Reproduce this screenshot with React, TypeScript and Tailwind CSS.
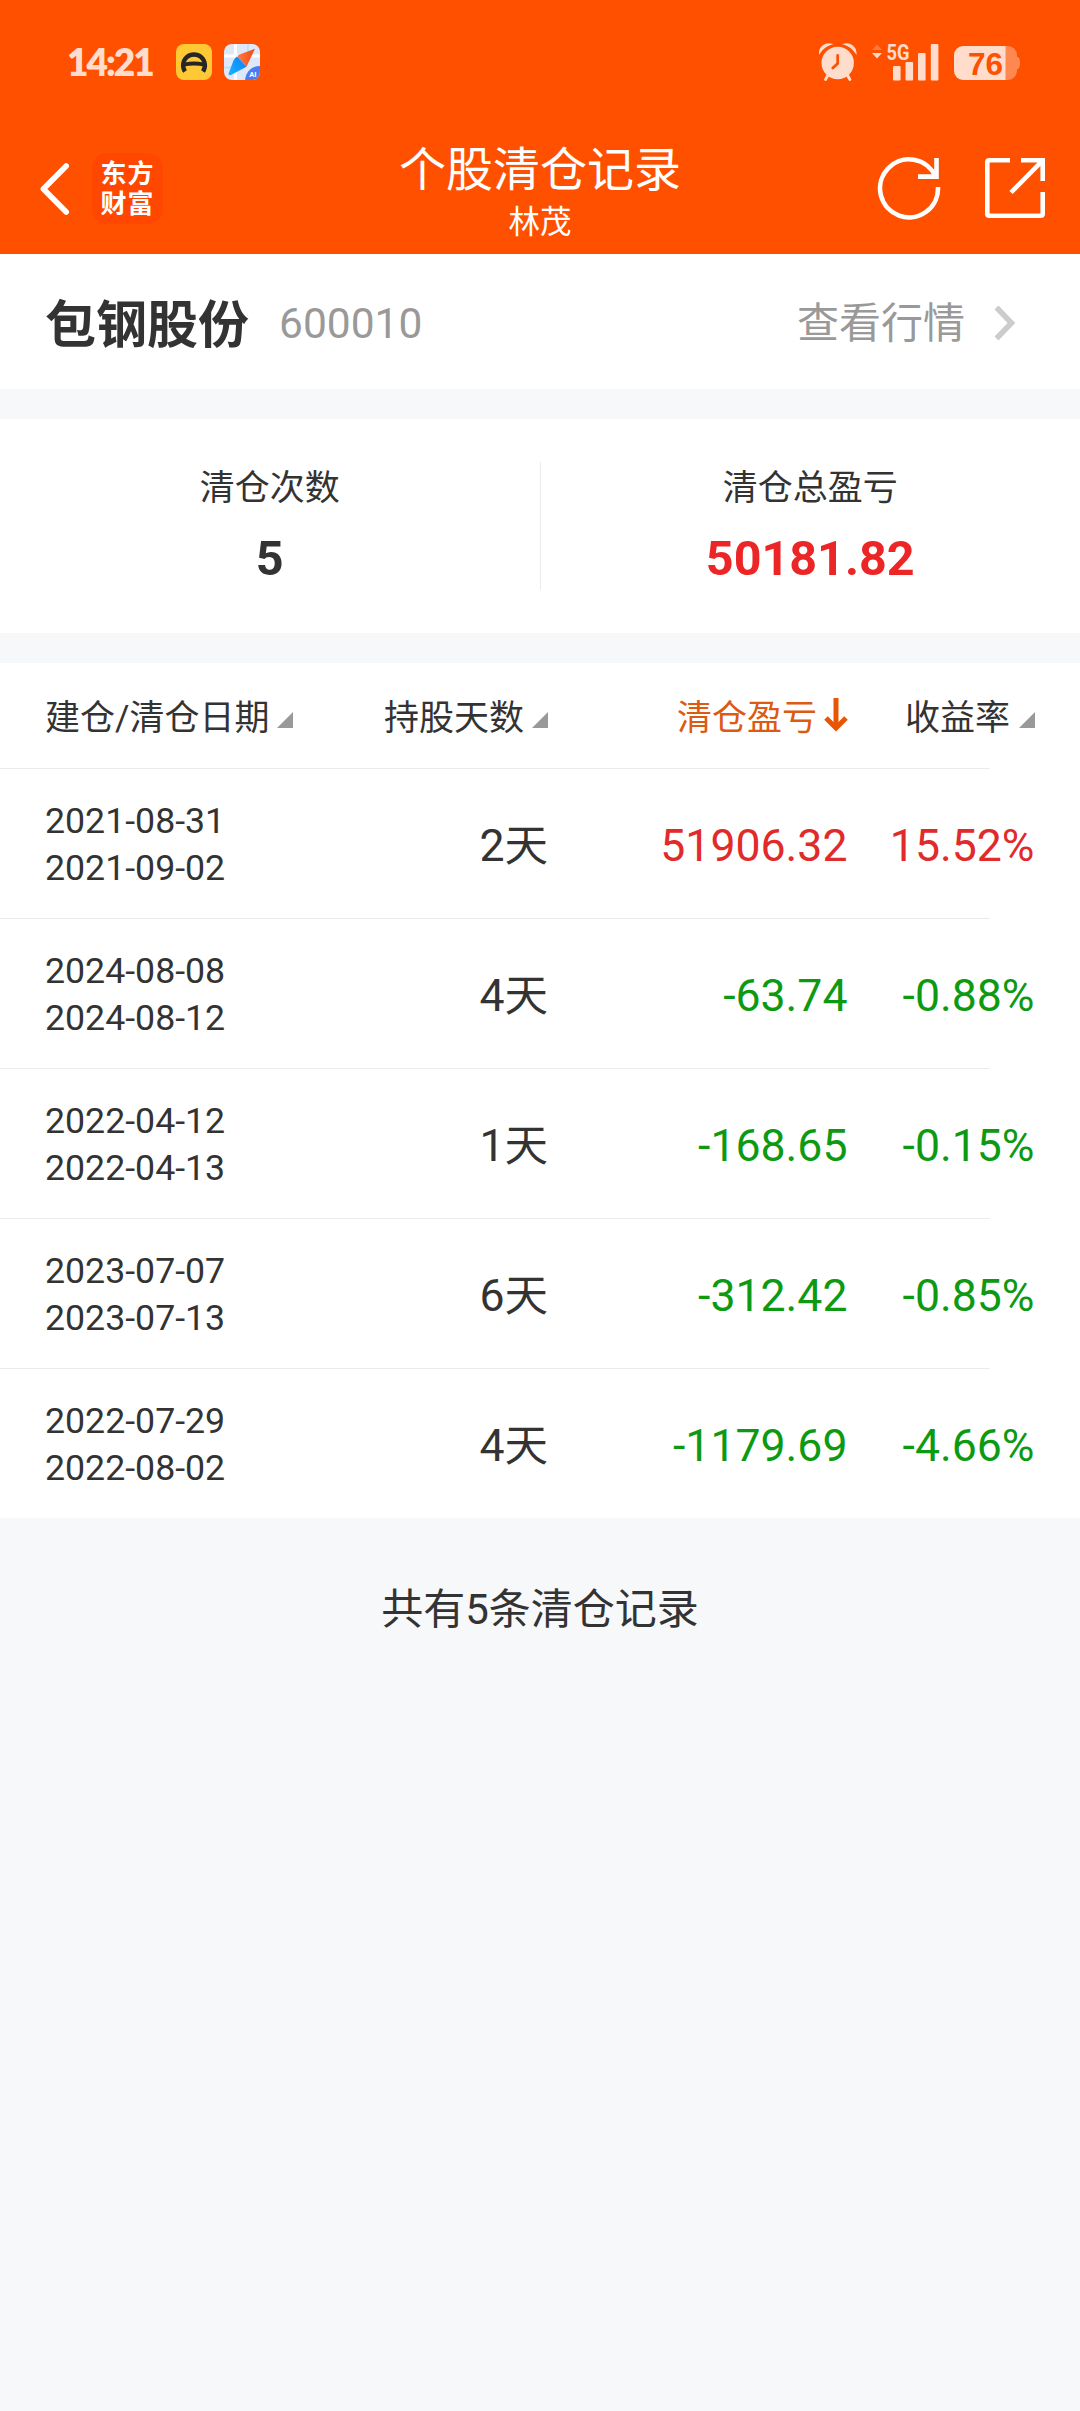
type ClearRecord = {
  open: string;
  close: string;
  days: number;
  profit: string;
  rate: string;
};

const RECORDS: ClearRecord[] = [
  { open: "2021-08-31", close: "2021-09-02", days: 2, profit: "51906.32", rate: "15.52%" },
  { open: "2024-08-08", close: "2024-08-12", days: 4, profit: "-63.74", rate: "-0.88%" },
  { open: "2022-04-12", close: "2022-04-13", days: 1, profit: "-168.65", rate: "-0.15%" },
  { open: "2023-07-07", close: "2023-07-13", days: 6, profit: "-312.42", rate: "-0.85%" },
  { open: "2022-07-29", close: "2022-08-02", days: 4, profit: "-1179.69", rate: "-4.66%" },
];

function CarAppIcon() {
  return (
    <svg width="36" height="36" viewBox="0 0 36 36">
      <rect width="36" height="36" rx="8" fill="#ffc935" />
      <path d="M9 27.5 A10.9 10.9 0 1 1 27 27.5" fill="none" stroke="#262626" strokeWidth="4.4" />
      <path d="M8 18.8 Q18 16.4 28 18.8 V22.4 Q18 20.6 8 22.4 Z" fill="#262626" />
    </svg>
  );
}

function MapAppIcon() {
  return (
    <svg width="36" height="36" viewBox="0 0 36 36">
      <defs>
        <clipPath id="map-tile">
          <rect width="36" height="36" rx="8" />
        </clipPath>
        <linearGradient id="needle-blue" x1="0" y1="1" x2="1" y2="0">
          <stop offset="0" stopColor="#19b5ff" />
          <stop offset="1" stopColor="#0a7cff" />
        </linearGradient>
        <linearGradient id="needle-red" x1="0" y1="0" x2="1" y2="0">
          <stop offset="0" stopColor="#ff7a45" />
          <stop offset="1" stopColor="#f04a12" />
        </linearGradient>
      </defs>
      <g clipPath="url(#map-tile)">
        <rect width="36" height="36" fill="#dde8fa" />
        <path d="M0 12 H36 M11.5 0 V36" stroke="#fff" strokeWidth="3" />
        <path d="M0 23.5 H10 M24 0 V9" stroke="#b9dcf2" strokeWidth="1.5" />
        <path d="M36 22 C27 22 22 28 21 36 H36 Z" fill="#4a7df5" />
        <path d="M31 4.8 L15.5 10.5 Q13 11.5 14 13.5 L22.5 22.8 Z" fill="url(#needle-red)" />
        <path d="M13 12.5 Q10.5 14 9.5 16.5 L4.6 29.5 Q4.5 31.8 7 31 L22.5 22.8 Z" fill="url(#needle-blue)" />
        <text x="25.2" y="33" fontSize="7.5" fontWeight="700" fill="#fff" fontFamily="Roboto, sans-serif">AI</text>
      </g>
    </svg>
  );
}

function AlarmIcon() {
  return (
    <svg width="38" height="38" viewBox="0 0 38 38" fill="#ffdccb">
      <circle cx="18.7" cy="20" r="16.2" />
      <path d="M0.8 9.2 A9 9 0 0 1 11.3 1.2 Q5 3.5 0.8 9.2 Z" stroke="#ffdccb" strokeWidth="1.6" />
      <path d="M36.6 9.2 A9 9 0 0 0 26.1 1.2 Q32.4 3.5 36.6 9.2 Z" stroke="#ffdccb" strokeWidth="1.6" />
      <path d="M9 32 L6.6 36.4 M28.4 32 L30.8 36.4" stroke="#ffdccb" strokeWidth="3" strokeLinecap="round" />
      <path d="M18.7 12.5 V20.5 L13.8 25" fill="none" stroke="#ff5000" strokeWidth="2.8" strokeLinecap="round" strokeLinejoin="round" />
    </svg>
  );
}

function SignalIcon() {
  return (
    <svg width="67" height="47" viewBox="0 -10 67 47" fill="#ffdccb">
      <path d="M5 0.5 L10 6 H0 Z" fill="#ff7a3f" />
      <path d="M0 9 H10 L5 14.5 Z" />
      <text x="14.6" y="15.6" fontSize="22" fontWeight="700" fontFamily="Roboto, sans-serif" textLength="23" lengthAdjust="spacingAndGlyphs">5G</text>
      <rect x="21" y="22" width="7.6" height="14.5" rx="1" />
      <rect x="33.5" y="18" width="7.6" height="18.5" rx="1" />
      <rect x="46" y="9" width="7.6" height="27.5" rx="1" />
      <rect x="58.8" y="0" width="7.6" height="36.5" rx="1" />
    </svg>
  );
}

function BatteryIcon() {
  return (
    <svg width="67" height="34" viewBox="0 0 67 34">
      <path d="M51 0 H54 A9 9 0 0 1 63 9 V11 H64 Q66 12 66 17 Q66 22 64 23 H63 V25 A9 9 0 0 1 54 34 H51 Z" fill="#ff8850" />
      <path d="M9 0 H51.5 V34 H9 A9 9 0 0 1 0 25 V9 A9 9 0 0 1 9 0 Z" fill="#ffdccb" />
      <text x="14" y="28.5" fontSize="31" fontWeight="700" fill="#ff5000" fontFamily="'Liberation Sans', sans-serif" textLength="35" lengthAdjust="spacingAndGlyphs">76</text>
    </svg>
  );
}

function StatusBar() {
  return (
    <div className="flex h-[124px] items-start pl-[67px] pr-[59px] pt-[43px] text-[#ffdccb]">
      <span className="w-[109px] font-[Lato] text-[37px] font-extrabold leading-[37px] tracking-[-2px]">14:21</span>
      <div className="mt-px flex gap-3">
        <CarAppIcon />
        <MapAppIcon />
      </div>
      <div className="ml-auto flex items-start">
        <AlarmIcon />
        <div className="-mt-[9px] ml-[15px]">
          <SignalIcon />
        </div>
        <div className="ml-[15px] mt-[3px]">
          <BatteryIcon />
        </div>
      </div>
    </div>
  );
}

function NavBar() {
  return (
    <div className="grid h-[130px] grid-cols-[1fr_auto_1fr] text-white">
      <div className="flex items-start pl-10 pt-[29px]">
        <svg className="mt-[9px]" width="30" height="54" viewBox="0 0 30 54" fill="none" stroke="#fff" strokeWidth="5.6" strokeLinecap="round" strokeLinejoin="round">
          <path d="M26.2 4 L3.4 27 L26.2 50" />
        </svg>
        <div className="ml-[22px] flex h-[71px] w-[71px] flex-col items-center justify-center rounded-[15px] bg-[#ff4700] text-[26px] font-bold leading-[30px] tracking-[1px]">
          <span>东方</span>
          <span>财富</span>
        </div>
      </div>
      <div className="flex flex-col items-center pt-4">
        <h1 className="text-[47px] leading-[60px]">个股清仓记录</h1>
        <p className="mt-[3px] text-[31.5px] leading-[40px]">林茂</p>
      </div>
      <div className="flex items-start justify-end gap-[43px] pr-[34px] pt-8">
        <svg width="64" height="64" viewBox="0 0 64 64" fill="none" stroke="#fff" strokeWidth="4.6">
          <path d="M61 31 A29 29 0 1 1 58.5 20.5" />
          <path d="M59.5 2 V20.6 H41" />
        </svg>
        <svg width="62" height="62" viewBox="0 0 62 62" fill="none" stroke="#fff" strokeWidth="4.6">
          <path d="M26 4.3 H5.3 Q3.3 4.3 3.3 6.3 V57.7 Q3.3 59.7 5.3 59.7 H56.7 Q58.7 59.7 58.7 57.7 V36" />
          <path d="M37 4.3 H58.7 V25 M58.7 4.3 L27 36.5" />
        </svg>
      </div>
    </div>
  );
}

function SortMark() {
  return (
    <svg className="mt-[3px] shrink-0" width="16" height="16" viewBox="0 0 16 16">
      <path d="M16 0 V16 H0 Z" fill="#999" />
    </svg>
  );
}

function SortDown() {
  return (
    <svg className="-mt-[7px] shrink-0" width="24" height="34" viewBox="0 0 24 34" fill="none" stroke="#ea5504" strokeWidth="5">
      <path d="M12 0 V30" />
      <path d="M2 20 L12 30 L22 20" />
    </svg>
  );
}

export default function App() {
  return (
    <div className="min-h-[2411px] w-[1080px] bg-[#f6f8fa] font-[Roboto,'Noto_Sans_CJK_SC',sans-serif] text-[#333]">
      <header className="bg-[#ff5000]">
        <StatusBar />
        <NavBar />
      </header>

      {/* Stock */}
      <section className="flex h-[135px] items-center bg-white pl-[45px] pr-[64px] pt-[9px]">
        <h2 className="text-[51px] font-bold leading-[60px]">包钢股份</h2>
        <span className="-mt-1 ml-[30px] text-[42.5px] leading-[60px] text-[#999]">600010</span>
        <span className="-mt-1 ml-auto text-[42px] leading-[60px] text-[#999]">查看行情</span>
        <svg className="-mt-[7px] ml-[29px]" width="22" height="36" viewBox="0 0 22 36" fill="none" stroke="#ccc" strokeWidth="5.5">
          <path d="M2.5 2.5 L17.5 18 L2.5 33.5" />
        </svg>
      </section>

      {/* Totals */}
      <section className="mt-[30px] flex h-[214px] bg-white pt-[43px]">
        <div className="flex h-32 flex-1 flex-col items-center border-r border-[#ebebeb]">
          <span className="mt-[5px] text-[35px] leading-[44px]">清仓次数</span>
          <span className="mt-5 text-[48.5px] font-bold leading-[56px]">5</span>
        </div>
        <div className="flex h-32 flex-1 flex-col items-center">
          <span className="mt-[5px] text-[35px] leading-[44px]">清仓总盈亏</span>
          <span className="mt-5 text-[48.5px] font-bold leading-[56px] text-[#ec2626]">50181.82</span>
        </div>
      </section>

      {/* Records */}
      <section className="mt-[30px] bg-white">
        <div className="grid h-[105px] grid-cols-[248px_255px_300px_187px] items-center pl-[45px] pt-1.5 text-[35px] leading-[44px]">
          <div className="flex items-center justify-between">建仓/清仓日期<SortMark /></div>
          <div className="flex items-center justify-end gap-2">持股天数<SortMark /></div>
          <div className="flex items-center justify-end gap-[7px] text-[#dc5a12]">清仓盈亏<SortDown /></div>
          <div className="flex items-center justify-end gap-[9px]">收益率<SortMark /></div>
        </div>
        {RECORDS.map((r) => {
          const tone = r.profit.startsWith("-") ? "text-[#0d9a12]" : "text-[#e12a2a]";
          return (
            <div key={r.open} className="h-[150px]">
              <div className="h-px w-[990px] bg-[#ebebeb]" />
              <div className="grid h-[149px] grid-cols-[248px_255px_299.5px_187px] items-center pl-[45px] pt-1 text-right text-[44.6px] leading-[62px]">
                <div className="-mt-px text-left text-[35.7px] leading-[47px]">
                  <p>{r.open}</p>
                  <p>{r.close}</p>
                </div>
                <div className="pt-px">
                  {r.days}
                  <span className="text-[43.5px]">天</span>
                </div>
                <div className={`pt-px ${tone}`}>{r.profit}</div>
                <div className={`pt-px ${tone}`}>{r.rate}</div>
              </div>
            </div>
          );
        })}
      </section>

      <p className="pt-[62px] text-center text-[42px] leading-[60px]">共有5条清仓记录</p>
    </div>
  );
}
